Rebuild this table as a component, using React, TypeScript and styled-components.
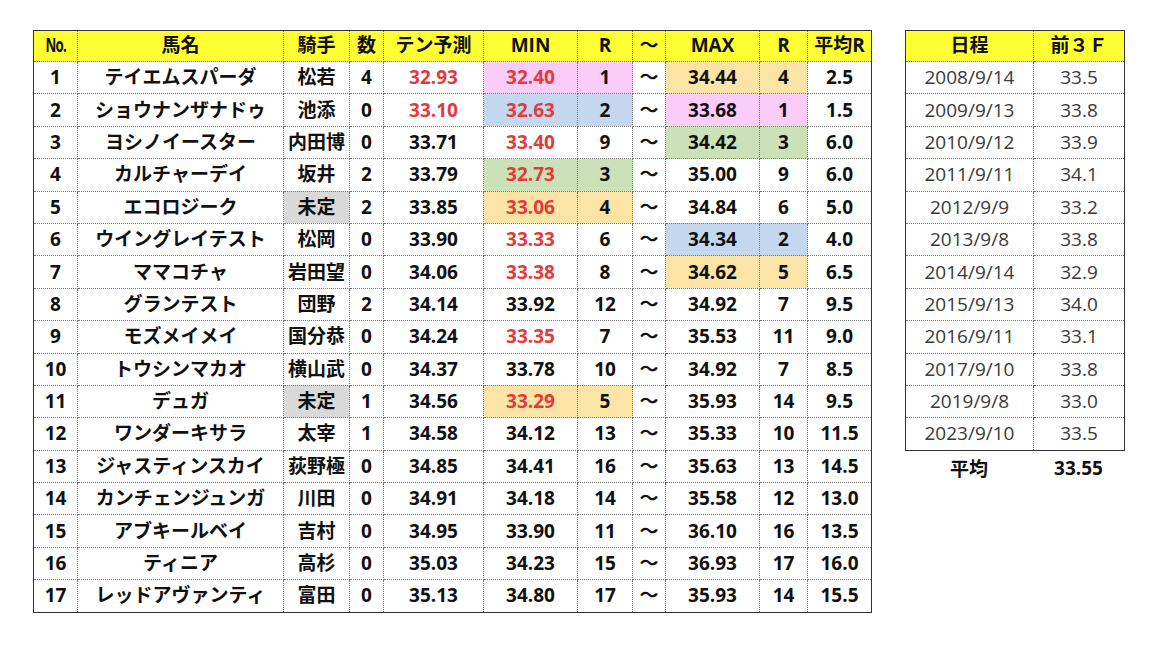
import React from "react";
import styled, { createGlobalStyle } from "styled-components";

const GlobalStyle = createGlobalStyle`
  html, body {
    margin: 0;
    padding: 0;
    background: #ffffff;
  }
  body {
    font-family: "Open Sans", "Noto Sans CJK JP", sans-serif;
    color: #111;
  }
`;

const Page = styled.div`
  display: flex;
  align-items: flex-start;
  gap: 33px;
  padding: 30px 0 0 33px;
  width: 1165px;
  height: 662px;
  box-sizing: border-box;
`;

const Table = styled.table`
  border-collapse: collapse;
  table-layout: fixed;
  border: 1px solid #333;
  font-size: 19px;
  font-weight: 700;
`;

const HeadRow = styled.tr`
  height: 31px;
`;

const BodyRow = styled.tr`
  height: 32.4px;
`;

const Th = styled.th`
  background: #ffff33;
  border: 1px dotted #777;
  padding: 0 0 1px;
  line-height: 1;
  text-align: center;
  vertical-align: middle;
  white-space: nowrap;
  font-weight: 700;
`;

const NoMark = styled.span`
  display: inline-block;
  transform: scaleX(0.7);
  letter-spacing: -1px;
`;

type Tone = "pink" | "blue" | "orange" | "green" | "gray";

const tones: Record<Tone, string> = {
  pink: "#f9ccf9",
  blue: "#c3d8ee",
  orange: "#fce4a6",
  green: "#cbe2b8",
  gray: "#d9d9d9",
};

const Td = styled.td<{ $tone?: Tone; $red?: boolean; $light?: boolean }>`
  border: 1px dotted #777;
  padding: 0;
  line-height: 1;
  text-align: center;
  vertical-align: middle;
  white-space: nowrap;
  background: ${(p) => (p.$tone ? tones[p.$tone] : "transparent")};
  color: ${(p) => (p.$red ? "#e53a3a" : p.$light ? "#3a3a3a" : "#111")};
  font-weight: ${(p) => (p.$light ? 400 : 700)};
`;

const Side = styled.div`
  display: flex;
  flex-direction: column;
`;

const AvgRow = styled.div`
  display: grid;
  grid-template-columns: 128px 91px;
  height: 34px;
  align-items: center;
  font-size: 19px;
  font-weight: 700;
  text-align: center;
`;

interface Horse {
  no: number;
  name: string;
  jockey: string;
  jockeyTbd?: boolean;
  count: number;
  ten: string;
  min: string;
  minR: number;
  minTone?: Tone;
  max: string;
  maxR: number;
  maxTone?: Tone;
  avg: string;
}

const horses: Horse[] = [
  { no: 1, name: "テイエムスパーダ", jockey: "松若", count: 4, ten: "32.93", min: "32.40", minR: 1, minTone: "pink", max: "34.44", maxR: 4, maxTone: "orange", avg: "2.5" },
  { no: 2, name: "ショウナンザナドゥ", jockey: "池添", count: 0, ten: "33.10", min: "32.63", minR: 2, minTone: "blue", max: "33.68", maxR: 1, maxTone: "pink", avg: "1.5" },
  { no: 3, name: "ヨシノイースター", jockey: "内田博", count: 0, ten: "33.71", min: "33.40", minR: 9, max: "34.42", maxR: 3, maxTone: "green", avg: "6.0" },
  { no: 4, name: "カルチャーデイ", jockey: "坂井", count: 2, ten: "33.79", min: "32.73", minR: 3, minTone: "green", max: "35.00", maxR: 9, avg: "6.0" },
  { no: 5, name: "エコロジーク", jockey: "未定", jockeyTbd: true, count: 2, ten: "33.85", min: "33.06", minR: 4, minTone: "orange", max: "34.84", maxR: 6, avg: "5.0" },
  { no: 6, name: "ウイングレイテスト", jockey: "松岡", count: 0, ten: "33.90", min: "33.33", minR: 6, max: "34.34", maxR: 2, maxTone: "blue", avg: "4.0" },
  { no: 7, name: "ママコチャ", jockey: "岩田望", count: 0, ten: "34.06", min: "33.38", minR: 8, max: "34.62", maxR: 5, maxTone: "orange", avg: "6.5" },
  { no: 8, name: "グランテスト", jockey: "団野", count: 2, ten: "34.14", min: "33.92", minR: 12, max: "34.92", maxR: 7, avg: "9.5" },
  { no: 9, name: "モズメイメイ", jockey: "国分恭", count: 0, ten: "34.24", min: "33.35", minR: 7, max: "35.53", maxR: 11, avg: "9.0" },
  { no: 10, name: "トウシンマカオ", jockey: "横山武", count: 0, ten: "34.37", min: "33.78", minR: 10, max: "34.92", maxR: 7, avg: "8.5" },
  { no: 11, name: "デュガ", jockey: "未定", jockeyTbd: true, count: 1, ten: "34.56", min: "33.29", minR: 5, minTone: "orange", max: "35.93", maxR: 14, avg: "9.5" },
  { no: 12, name: "ワンダーキサラ", jockey: "太宰", count: 1, ten: "34.58", min: "34.12", minR: 13, max: "35.33", maxR: 10, avg: "11.5" },
  { no: 13, name: "ジャスティンスカイ", jockey: "荻野極", count: 0, ten: "34.85", min: "34.41", minR: 16, max: "35.63", maxR: 13, avg: "14.5" },
  { no: 14, name: "カンチェンジュンガ", jockey: "川田", count: 0, ten: "34.91", min: "34.18", minR: 14, max: "35.58", maxR: 12, avg: "13.0" },
  { no: 15, name: "アブキールベイ", jockey: "吉村", count: 0, ten: "34.95", min: "33.90", minR: 11, max: "36.10", maxR: 16, avg: "13.5" },
  { no: 16, name: "ティニア", jockey: "高杉", count: 0, ten: "35.03", min: "34.23", minR: 15, max: "36.93", maxR: 17, avg: "16.0" },
  { no: 17, name: "レッドアヴァンティ", jockey: "富田", count: 0, ten: "35.13", min: "34.80", minR: 17, max: "35.93", maxR: 14, avg: "15.5" },
];

const history: [string, string][] = [
  ["2008/9/14", "33.5"],
  ["2009/9/13", "33.8"],
  ["2010/9/12", "33.9"],
  ["2011/9/11", "34.1"],
  ["2012/9/9", "33.2"],
  ["2013/9/8", "33.8"],
  ["2014/9/14", "32.9"],
  ["2015/9/13", "34.0"],
  ["2016/9/11", "33.1"],
  ["2017/9/10", "33.8"],
  ["2019/9/8", "33.0"],
  ["2023/9/10", "33.5"],
];

const mainCols = [44, 206, 66, 34, 100, 94, 55, 33, 94, 48, 64];
const isFast = (v: string) => parseFloat(v) < 33.55;

const App: React.FC = () => {
  return (
    <>
      <GlobalStyle />
      <Page>
        <Table>
          <colgroup>
            {mainCols.map((w, i) => (
              <col key={i} style={{ width: w }} />
            ))}
          </colgroup>
          <thead>
            <HeadRow>
              <Th>
                <NoMark>No.</NoMark>
              </Th>
              <Th>馬名</Th>
              <Th>騎手</Th>
              <Th>数</Th>
              <Th>テン予測</Th>
              <Th>MIN</Th>
              <Th>R</Th>
              <Th>～</Th>
              <Th>MAX</Th>
              <Th>R</Th>
              <Th>平均R</Th>
            </HeadRow>
          </thead>
          <tbody>
            {horses.map((h) => (
              <BodyRow key={h.no}>
                <Td>{h.no}</Td>
                <Td>{h.name}</Td>
                <Td $tone={h.jockeyTbd ? "gray" : undefined}>{h.jockey}</Td>
                <Td>{h.count}</Td>
                <Td $red={isFast(h.ten)}>{h.ten}</Td>
                <Td $tone={h.minTone} $red={isFast(h.min)}>
                  {h.min}
                </Td>
                <Td $tone={h.minTone}>{h.minR}</Td>
                <Td>～</Td>
                <Td $tone={h.maxTone}>{h.max}</Td>
                <Td $tone={h.maxTone}>{h.maxR}</Td>
                <Td>{h.avg}</Td>
              </BodyRow>
            ))}
          </tbody>
        </Table>

        <Side>
          <Table>
            <colgroup>
              <col style={{ width: 128 }} />
              <col style={{ width: 91 }} />
            </colgroup>
            <thead>
              <HeadRow>
                <Th>日程</Th>
                <Th>前３Ｆ</Th>
              </HeadRow>
            </thead>
            <tbody>
              {history.map(([date, f3]) => (
                <BodyRow key={date}>
                  <Td $light>{date}</Td>
                  <Td $light>{f3}</Td>
                </BodyRow>
              ))}
            </tbody>
          </Table>
          <AvgRow>
            <span>平均</span>
            <span>33.55</span>
          </AvgRow>
        </Side>
      </Page>
    </>
  );
};

export default App;
